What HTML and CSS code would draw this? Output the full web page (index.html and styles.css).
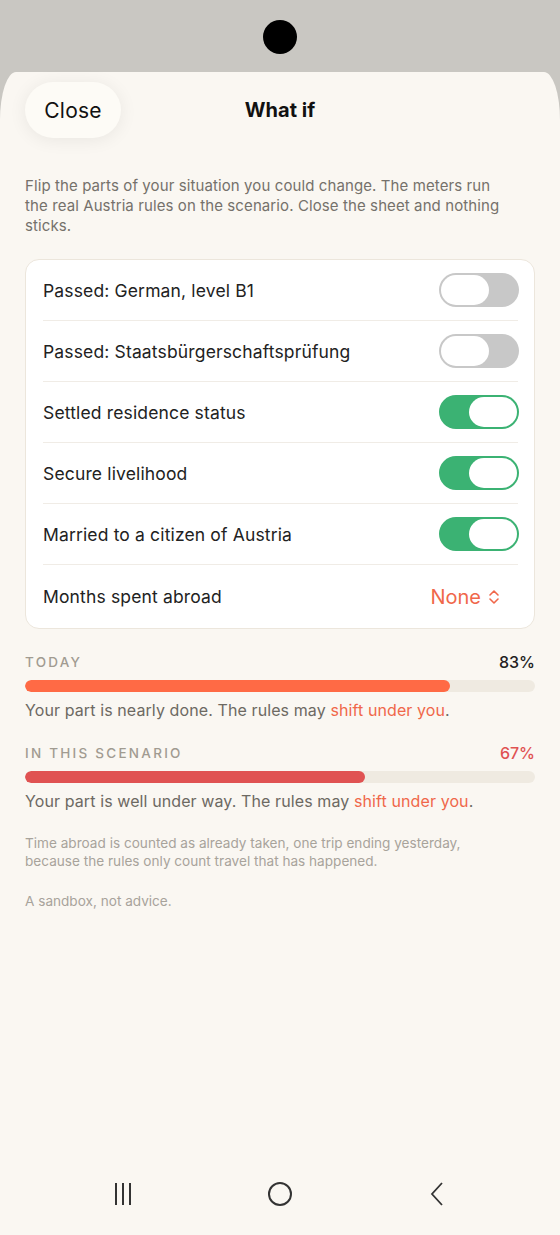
FILE: index.html
```html
<!DOCTYPE html>
<html lang="en">
  <head>
    <meta charset="UTF-8" />
    <meta name="viewport" content="width=device-width, initial-scale=1.0" />
    <title>What if</title>
    <link rel="stylesheet" href="styles.css">
  </head>
  <body>
    <div class="status-bar">
      <div class="camera"></div>
    </div>

    <div class="sheet">
      <header class="sheet-header">
        <button class="close-btn">Close</button>
        <h1>What if</h1>
        <span></span>
      </header>

      <p class="intro">Flip the parts of your situation you could change. The meters run the real Austria rules on the scenario. Close the sheet and nothing sticks.</p>

      <div class="card">
        <div class="row">
          <span>Passed: German, level B1</span>
          <span class="toggle"><span class="knob"></span></span>
        </div>
        <div class="row">
          <span>Passed: Staatsbürgerschaftsprüfung</span>
          <span class="toggle"><span class="knob"></span></span>
        </div>
        <div class="row">
          <span>Settled residence status</span>
          <span class="toggle on"><span class="knob"></span></span>
        </div>
        <div class="row">
          <span>Secure livelihood</span>
          <span class="toggle on"><span class="knob"></span></span>
        </div>
        <div class="row">
          <span>Married to a citizen of Austria</span>
          <span class="toggle on"><span class="knob"></span></span>
        </div>
        <div class="row row-last">
          <span>Months spent abroad</span>
          <span class="picker">None
            <svg width="12" height="18" viewBox="0 0 12 18" fill="none" stroke="currentColor" stroke-width="1.6" stroke-linecap="round" stroke-linejoin="round">
              <path d="M2 7l4-4 4 4" />
              <path d="M2 11l4 4 4-4" />
            </svg>
          </span>
        </div>
      </div>

      <div class="meter">
        <div class="meter-head">
          <span class="meter-label">Today</span>
          <span class="meter-value">83%</span>
        </div>
        <div class="track"><div class="fill" style="width: 83.3%"></div></div>
        <p class="meter-note">Your part is nearly done. The rules may <a href="#">shift under you</a>.</p>
      </div>

      <div class="meter meter-alt">
        <div class="meter-head">
          <span class="meter-label">In this scenario</span>
          <span class="meter-value">67%</span>
        </div>
        <div class="track"><div class="fill" style="width: 66.7%"></div></div>
        <p class="meter-note">Your part is well under way. The rules may <a href="#">shift under you</a>.</p>
      </div>

      <p class="footnote">Time abroad is counted as already taken, one trip ending yesterday, because the rules only count travel that has happened.</p>
      <p class="footnote">A sandbox, not advice.</p>

      <nav class="nav-bar">
        <svg width="18" height="26" viewBox="0 0 18 26" fill="none" stroke="#333" stroke-width="2">
          <path d="M2 2v22M9 2v22M16 2v22" />
        </svg>
        <svg width="26" height="26" viewBox="0 0 26 26" fill="none" stroke="#333" stroke-width="2">
          <circle cx="13" cy="13" r="11" />
        </svg>
        <svg width="14" height="26" viewBox="0 0 14 26" fill="none" stroke="#333" stroke-width="1.8">
          <path d="M12 2L2 13l10 11" />
        </svg>
      </nav>
    </div>
  </body>
</html>
```

FILE: styles.css
```css
body {
  margin: 0;
  background-color: #c9c7c2;
  font-family: Inter, "Noto Sans", sans-serif;
  color: #1f1f1f;
}
.status-bar {
  height: 72px;
  display: flex;
  align-items: center;
  justify-content: center;
}
.camera {
  width: 34px;
  height: 34px;
  border-radius: 50%;
  background-color: #000;
  margin-top: 2px;
}
.sheet {
  background-color: #faf7f2;
  border-radius: 16px 16px 0 0 / 48px 48px 0 0;
  min-height: 1163px;
  display: flex;
  flex-direction: column;
  padding: 10px 25px 0;
  box-sizing: border-box;
}
.sheet-header {
  display: grid;
  grid-template-columns: 1fr auto 1fr;
  align-items: center;
  height: 56px;
}
.close-btn {
  width: 96px;
  height: 56px;
  border: none;
  border-radius: 28px;
  background-color: #fdfbf6;
  box-shadow: 0 2px 18px rgba(0, 0, 0, 0.07);
  font-family: inherit;
  font-size: 21px;
  letter-spacing: 0.2px;
  color: #111;
  cursor: pointer;
}
.sheet-header h1 {
  margin: 0;
  font-size: 20px;
  font-weight: 700;
  color: #111;
}
.intro {
  margin: 38px 0 23px;
  padding-right: 30px;
  font-size: 15px;
  line-height: 20px;
  letter-spacing: 0.1px;
  color: #75716b;
}
.card {
  background-color: #fff;
  border: 1px solid #ece6dc;
  border-radius: 14px;
  padding: 0 16px 0 17px;
}
.row {
  display: flex;
  align-items: center;
  justify-content: space-between;
  height: 60px;
  border-bottom: 1px solid #f0ece6;
  font-size: 17.5px;
  letter-spacing: 0.15px;
  color: #222;
}
.row-last {
  height: 63px;
  border-bottom: none;
}
.toggle {
  width: 80px;
  height: 34px;
  border-radius: 17px;
  background-color: #c8c8c8;
  padding: 2px;
  box-sizing: border-box;
  display: flex;
  margin-right: -1px;
}
.knob {
  width: 48px;
  height: 30px;
  border-radius: 15px;
  background-color: #fff;
}
.toggle.on {
  background-color: #3bb273;
  justify-content: flex-end;
}
.picker {
  display: flex;
  align-items: center;
  gap: 7px;
  color: #f0674a;
  font-size: 20px;
  letter-spacing: 0;
  margin-right: 18px;
}
.meter {
  margin-top: 23px;
}
.meter + .meter {
  margin-top: 22px;
}
.meter-head {
  display: flex;
  justify-content: space-between;
  line-height: 20px;
}
.meter-label {
  font-size: 13.5px;
  font-weight: 500;
  letter-spacing: 2.25px;
  text-transform: uppercase;
  color: #a19b91;
}
.meter-value {
  font-size: 16px;
  font-weight: 500;
  color: #222;
}
.track {
  height: 12px;
  margin-top: 8px;
  border-radius: 6px;
  background-color: #efeae1;
  overflow: hidden;
}
.fill {
  height: 100%;
  border-radius: 6px;
  background-color: #ff6a45;
}
.meter-alt .meter-value {
  color: #e05252;
}
.meter-alt .fill {
  background-color: #e05252;
}
.meter-note {
  margin: 7px 0 0;
  font-size: 16px;
  line-height: 22px;
  letter-spacing: 0.1px;
  color: #6d6962;
}
.meter-note a {
  color: #f0674a;
  text-decoration: none;
}
.footnote {
  margin: 22px 0 0;
  padding-right: 30px;
  font-size: 13.6px;
  line-height: 18px;
  color: #a8a39b;
}
.nav-bar {
  margin: auto -25px 0;
  height: 82px;
  display: grid;
  grid-template-columns: repeat(3, 157px);
  justify-content: center;
  justify-items: center;
  align-items: center;
}
```
